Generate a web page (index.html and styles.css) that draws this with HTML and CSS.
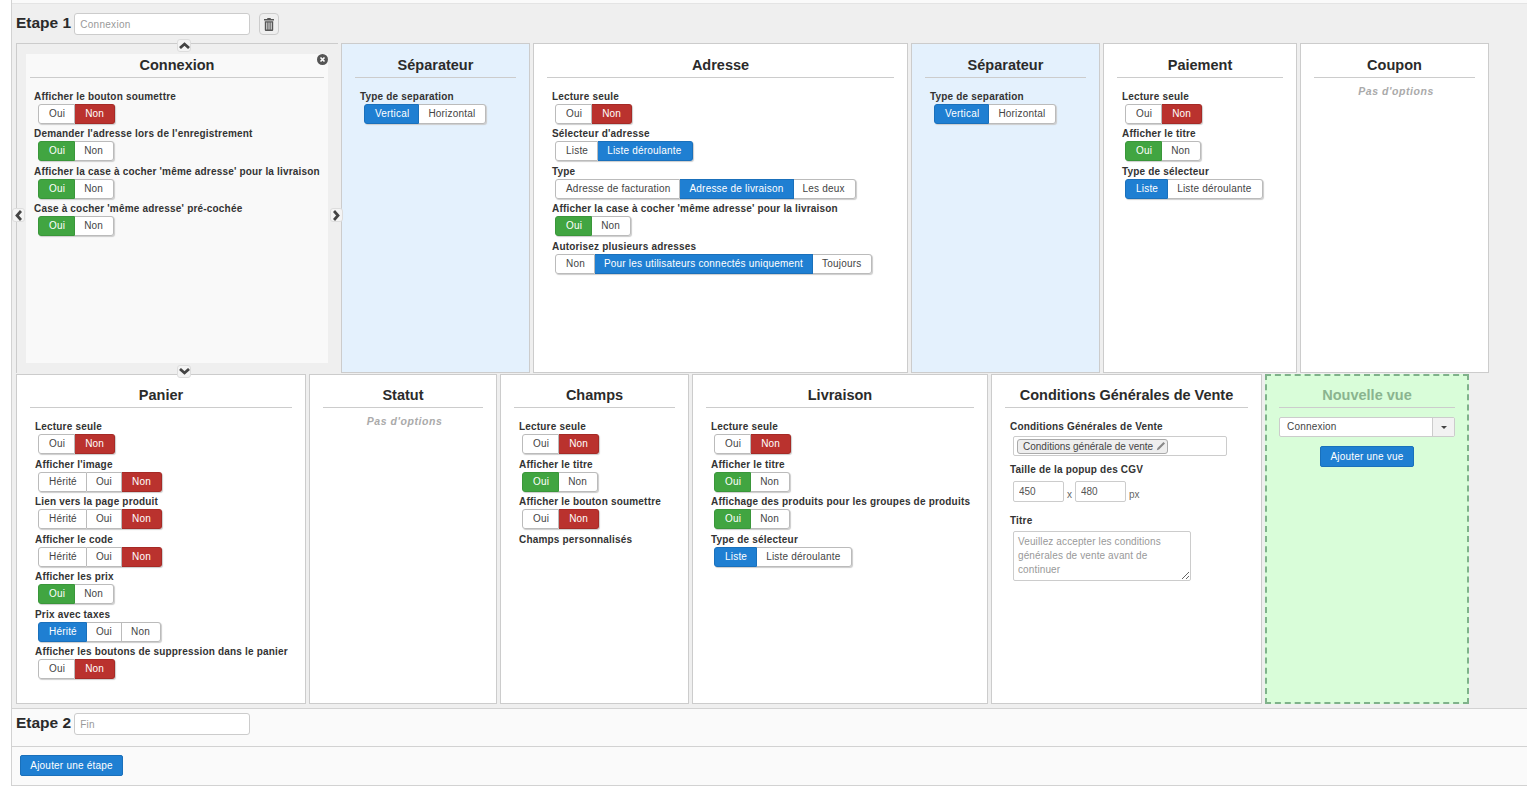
FILE: index.html
```html
<!DOCTYPE html>
<html lang="fr">
<head>
<meta charset="utf-8">
<title>Etapes</title>
<link rel="stylesheet" href="styles.css">
</head>
<body>
<main class="page">
  <section class="step step-main">
    <div class="step-head">
      <h2 class="step-title">Etape 1</h2>
      <input class="step-input" placeholder="Connexion">
      <button class="trash" aria-label="Supprimer">
        <svg width="10" height="13" viewBox="0 0 10 13"><path fill="#555" d="M3.5 0h3l.5 1h3v1.5H0V1h3zM.8 3.2h8.4V12a1 1 0 0 1-1 1H1.800a1 1 0 0 1-1-1zM2.300 4.500v7h1v-7zm2.200 0v7h1v-7zm2.200 0v7h1v-7z"/></svg>
      </button>
    </div>
    <div class="row row-one">
      <div class="slot w-connexion">
        <button class="nudge nudge-up"><svg width="11" height="7" viewBox="0 0 11 7"><path d="M1 6l4.500-4 4.500 4" fill="none" stroke="#444" stroke-width="2.800"/></svg></button>
        <button class="nudge nudge-down"><svg width="11" height="7" viewBox="0 0 11 7"><path d="M1 1l4.500 4 4.500-4" fill="none" stroke="#444" stroke-width="2.800"/></svg></button>
        <button class="nudge nudge-left"><svg width="7" height="11" viewBox="0 0 7 11"><path d="M6 1L2 5.500l4 4.500" fill="none" stroke="#444" stroke-width="2.800"/></svg></button>
        <button class="nudge nudge-right"><svg width="7" height="11" viewBox="0 0 7 11"><path d="M1 1l4 4.500-4 4.500" fill="none" stroke="#444" stroke-width="2.800"/></svg></button>
        <div class="selected">
          <svg class="close" width="11" height="11" viewBox="0 0 11 11"><circle cx="5.500" cy="5.500" r="5.500" fill="#555"/><path d="M3.500 3.500l4 4m0-4l-4 4" stroke="#fff" stroke-width="1.600"/></svg>
          <h3 class="card-title">Connexion</h3>
          <div class="field"><label>Afficher le bouton soumettre</label><div class="group"><span class="b">Oui</span><span class="b red">Non</span></div></div>
          <div class="field"><label>Demander l'adresse lors de l'enregistrement</label><div class="group"><span class="b green">Oui</span><span class="b">Non</span></div></div>
          <div class="field"><label>Afficher la case à cocher 'même adresse' pour la livraison</label><div class="group"><span class="b green">Oui</span><span class="b">Non</span></div></div>
          <div class="field"><label>Case à cocher 'même adresse' pré-cochée</label><div class="group"><span class="b green">Oui</span><span class="b">Non</span></div></div>
        </div>
      </div>
      <div class="card blue w-sep">
        <h3 class="card-title">Séparateur</h3>
        <div class="field"><label>Type de separation</label><div class="group"><span class="b sel">Vertical</span><span class="b">Horizontal</span></div></div>
      </div>
      <div class="card w-adresse">
        <h3 class="card-title">Adresse</h3>
        <div class="field"><label>Lecture seule</label><div class="group"><span class="b">Oui</span><span class="b red">Non</span></div></div>
        <div class="field"><label>Sélecteur d'adresse</label><div class="group"><span class="b">Liste</span><span class="b sel">Liste déroulante</span></div></div>
        <div class="field"><label>Type</label><div class="group"><span class="b">Adresse de facturation</span><span class="b sel">Adresse de livraison</span><span class="b">Les deux</span></div></div>
        <div class="field"><label>Afficher la case à cocher 'même adresse' pour la livraison</label><div class="group"><span class="b green">Oui</span><span class="b">Non</span></div></div>
        <div class="field"><label>Autorisez plusieurs adresses</label><div class="group"><span class="b">Non</span><span class="b sel">Pour les utilisateurs connectés uniquement</span><span class="b">Toujours</span></div></div>
      </div>
      <div class="card blue w-sep">
        <h3 class="card-title">Séparateur</h3>
        <div class="field"><label>Type de separation</label><div class="group"><span class="b sel">Vertical</span><span class="b">Horizontal</span></div></div>
      </div>
      <div class="card w-paiement">
        <h3 class="card-title">Paiement</h3>
        <div class="field"><label>Lecture seule</label><div class="group"><span class="b">Oui</span><span class="b red">Non</span></div></div>
        <div class="field"><label>Afficher le titre</label><div class="group"><span class="b green">Oui</span><span class="b">Non</span></div></div>
        <div class="field"><label>Type de sélecteur</label><div class="group"><span class="b sel">Liste</span><span class="b">Liste déroulante</span></div></div>
      </div>
      <div class="card w-sep">
        <h3 class="card-title">Coupon</h3>
        <p class="none">Pas d'options</p>
      </div>
    </div>
    <div class="row row-two">
      <div class="card w-panier">
        <h3 class="card-title">Panier</h3>
        <div class="field"><label>Lecture seule</label><div class="group"><span class="b">Oui</span><span class="b red">Non</span></div></div>
        <div class="field"><label>Afficher l'image</label><div class="group"><span class="b">Hérité</span><span class="b">Oui</span><span class="b red">Non</span></div></div>
        <div class="field"><label>Lien vers la page produit</label><div class="group"><span class="b">Hérité</span><span class="b">Oui</span><span class="b red">Non</span></div></div>
        <div class="field"><label>Afficher le code</label><div class="group"><span class="b">Hérité</span><span class="b">Oui</span><span class="b red">Non</span></div></div>
        <div class="field"><label>Afficher les prix</label><div class="group"><span class="b green">Oui</span><span class="b">Non</span></div></div>
        <div class="field"><label>Prix avec taxes</label><div class="group"><span class="b sel">Hérité</span><span class="b">Oui</span><span class="b">Non</span></div></div>
        <div class="field"><label>Afficher les boutons de suppression dans le panier</label><div class="group"><span class="b">Oui</span><span class="b red">Non</span></div></div>
      </div>
      <div class="card w-statut">
        <h3 class="card-title">Statut</h3>
        <p class="none">Pas d'options</p>
      </div>
      <div class="card w-champs">
        <h3 class="card-title">Champs</h3>
        <div class="field"><label>Lecture seule</label><div class="group"><span class="b">Oui</span><span class="b red">Non</span></div></div>
        <div class="field"><label>Afficher le titre</label><div class="group"><span class="b green">Oui</span><span class="b">Non</span></div></div>
        <div class="field"><label>Afficher le bouton soumettre</label><div class="group"><span class="b">Oui</span><span class="b red">Non</span></div></div>
        <div class="field"><label>Champs personnalisés</label></div>
      </div>
      <div class="card w-livraison">
        <h3 class="card-title">Livraison</h3>
        <div class="field"><label>Lecture seule</label><div class="group"><span class="b">Oui</span><span class="b red">Non</span></div></div>
        <div class="field"><label>Afficher le titre</label><div class="group"><span class="b green">Oui</span><span class="b">Non</span></div></div>
        <div class="field"><label>Affichage des produits pour les groupes de produits</label><div class="group"><span class="b green">Oui</span><span class="b">Non</span></div></div>
        <div class="field"><label>Type de sélecteur</label><div class="group"><span class="b sel">Liste</span><span class="b">Liste déroulante</span></div></div>
      </div>
      <div class="card w-cgv">
        <h3 class="card-title">Conditions Générales de Vente</h3>
        <div class="field field-tag">
          <label>Conditions Générales de Vente</label>
          <div class="tagbox"><span class="tag">Conditions générale de vente
            <svg width="10" height="10" viewBox="0 0 10 10"><path fill="#888" d="M7.500 1l1.500 1.500L3 8.500.8 9.200 1.500 7z"/></svg></span></div>
        </div>
        <div class="field field-size">
          <label>Taille de la popup des CGV</label>
          <div class="size"><input class="num" value="450"><span class="unit">x</span><input class="num" value="480"><span class="unit unit-px">px</span></div>
        </div>
        <div class="field field-area">
          <label>Titre</label>
          <textarea class="area" placeholder="Veuillez accepter les conditions générales de vente avant de continuer"></textarea>
        </div>
      </div>
      <div class="card new w-new">
        <h3 class="card-title">Nouvelle vue</h3>
        <div class="select"><span class="select-value">Connexion</span><span class="select-caret"><i class="caret"></i></span></div>
        <div class="new-action"><button class="primary">Ajouter une vue</button></div>
      </div>
    </div>
  </section>
  <section class="step step-end">
    <div class="step-head">
      <h2 class="step-title">Etape 2</h2>
      <input class="step-input" placeholder="Fin">
    </div>
  </section>
  <footer class="foot"><button class="primary">Ajouter une étape</button></footer>
</main>
</body>
</html>
```
FILE: styles.css
```css
* { box-sizing: border-box; }
html, body { margin: 0; padding: 0; background: #fff; }
body { font-family: "Liberation Sans", Arial, sans-serif; color: #333; overflow: hidden; }
.page { margin-left: 11px; height: 786px; border-left: 1px solid #d2d2d2; }
.step-main { height: 708px; border-top: 3px solid #fafafa; background: #efefef; box-shadow: inset 0 1px 0 #e4e4e4; padding: 10px 0 0 4px; }
.step-head { display: flex; align-items: flex-start; height: 30px; }
.step-title { margin: 0; font-size: 15.500px; line-height: 20px; font-weight: bold; color: #2a2a2a; white-space: nowrap; }
.step-input { width: 176px; height: 22px; margin-left: 3px; border: 1px solid #ccc; border-radius: 3px; background: #fff; padding: 0 5px; font: 10px "Liberation Sans", Arial, sans-serif; letter-spacing: .3px; }
.step-input::placeholder { color: #999; }
.trash { width: 20px; height: 22px; margin-left: 9px; padding: 0; display: flex; align-items: center; justify-content: center; background: #efefef; border: 1px solid #ccc; border-radius: 4px; }
.row { display: flex; gap: 3px; height: 330px; }
.row-two { margin-top: 1px; }
.card { position: relative; height: 330px; padding: 13px 13px 0; background: #fff; border: 1px solid #ccc; flex: none; }
.row-one .card { padding-top: 14px; }
.row-one .card-title { margin-bottom: 11.750px; }
.blue { background: #e4f1fd; }
.new { background: #d9fdd9; border: 2px dashed #7fb28a; padding: 12px 12px 0; }
.new .card-title { color: #8ab48f; }
.w-connexion { width: 322px; }
.w-sep { width: 189px; }
.w-adresse { width: 375px; }
.w-paiement { width: 194px; }
.w-panier { width: 290px; }
.w-statut { width: 188px; }
.w-champs { width: 189px; }
.w-livraison { width: 296px; }
.w-cgv { width: 271px; }
.w-new { width: 204px; }
.slot { position: relative; height: 330px; flex: none; padding: 10px 10px 10px 9px; border-top: 1px solid #ccc; border-left: 1px solid #ccc; background: #efefef; }
.selected { position: relative; height: 309px; background: #f9f9f9; padding: 4px 4px 0; }
.card-title { margin: 0 0 12px; height: 20px; font-size: 14.500px; line-height: 15px; font-weight: bold; text-align: center; color: #2b2b2b; border-bottom: 1px solid #ccc; white-space: nowrap; }
.close { position: absolute; top: 0; right: 0; }
.nudge { position: absolute; padding: 0; display: flex; align-items: center; justify-content: center; background: #f4f4f4; border: 1px solid #ddd; border-radius: 3px; z-index: 2; }
.nudge-up { top: -5px; left: 160px; width: 14px; height: 13px; }
.nudge-down { bottom: -5px; left: 160px; width: 14px; height: 13px; }
.nudge-left { top: 164px; left: -5px; width: 13px; height: 14px; }
.nudge-right { top: 164px; right: -5px; width: 13px; height: 14px; }
.field { height: 37.500px; padding-left: 5px; }
.selected .field { padding-left: 4px; }
.field label { display: block; font-size: 10px; line-height: 13px; font-weight: bold; color: #333; letter-spacing: .19px; white-space: nowrap; }
.group { display: inline-flex; margin: 1px 0 0 3px; height: 20px; border-radius: 3px; box-shadow: 1px 1px 1px #ccc; }
.blue .group, .selected .group { margin-left: 4px; }
.b { display: block; height: 20px; padding: 0 9px; font-size: 10px; line-height: 18px; color: #444; background: #fff; border: 1px solid #bbb; border-left-width: 0; letter-spacing: .2px; white-space: nowrap; }
.b:first-child { border-left-width: 1px; padding-left: 10px; border-radius: 3px 0 0 3px; }
.b:last-child { padding-right: 10px; border-radius: 0 3px 3px 0; }
.red { background: #ba322e; border-color: #a52a26; color: #fff; padding-left: 10px; }
.green { background: #41a541; border-color: #3a963a; color: #fff; }
.sel { background: #1f7fd2; border-color: #1a70bb; color: #fff; }
.none { margin: -5px 0 0; padding-left: 3px; text-align: center; font-size: 10.500px; font-weight: bold; font-style: italic; color: #aaa; letter-spacing: .55px; }
.field-tag { height: 43px; }
.tagbox { display: flex; align-items: center; width: 214px; height: 20px; margin: 3px 0 0 3px; padding: 0 3px; border: 1px solid #ccc; border-radius: 2px; background: #fff; }
.tag { display: inline-flex; align-items: center; gap: 3px; height: 15px; padding: 0 1px 0 5px; background: #eee; border: 1px solid #aaa; border-radius: 3px; font-size: 10px; color: #444; white-space: nowrap; }
.field-size { height: 51px; }
.size { display: flex; align-items: flex-end; margin: 5px 0 0 3px; }
.num { width: 51px; height: 21px; border: 1px solid #ccc; border-radius: 2px; background: #fff; padding: 0 5px; font: 10px "Liberation Sans", Arial, sans-serif; color: #555; }
.unit { width: 11px; text-align: center; font-size: 10px; color: #666; line-height: 14px; }
.unit-px { width: auto; margin-left: 3px; }
.area { display: block; width: 178px; height: 50px; margin: 4px 0 0 3px; padding: 3px 4px; border: 1px solid #ccc; border-radius: 2px; font: 10px/14px "Liberation Sans", Arial, sans-serif; letter-spacing: .12px; }
.area::placeholder { color: #999; }
.select { display: flex; height: 20px; margin-top: -3px; border: 1px solid #ccc; border-radius: 2px; background: #fff; }
.select-value { flex: 1; font-size: 10px; line-height: 18px; padding-left: 7px; color: #444; letter-spacing: .2px; }
.select-caret { width: 22px; display: flex; align-items: center; justify-content: center; background: #f2f2f2; border-left: 1px solid #ccc; }
.caret { width: 0; height: 0; border-top: 3px solid #444; border-left: 3px solid transparent; border-right: 3px solid transparent; }
.new-action { display: flex; justify-content: center; margin-top: 9px; }
.primary { height: 21px; padding: 0 9px; background: #1f7fd2; color: #fff; border: 1px solid #1a70bb; border-radius: 2px; font: 10px "Liberation Sans", Arial, sans-serif; letter-spacing: .2px; white-space: nowrap; }
.step-end { height: 39px; padding: 4px 0 0 4px; border-top: 1px solid #d2d2d2; border-bottom: 1px solid #d2d2d2; background: #fafafa; }
.foot { height: 39px; padding: 8px 0 0 8px; background: #fafafa; border-bottom: 1px solid #d2d2d2; }
.foot .primary { width: 103px; }
```
